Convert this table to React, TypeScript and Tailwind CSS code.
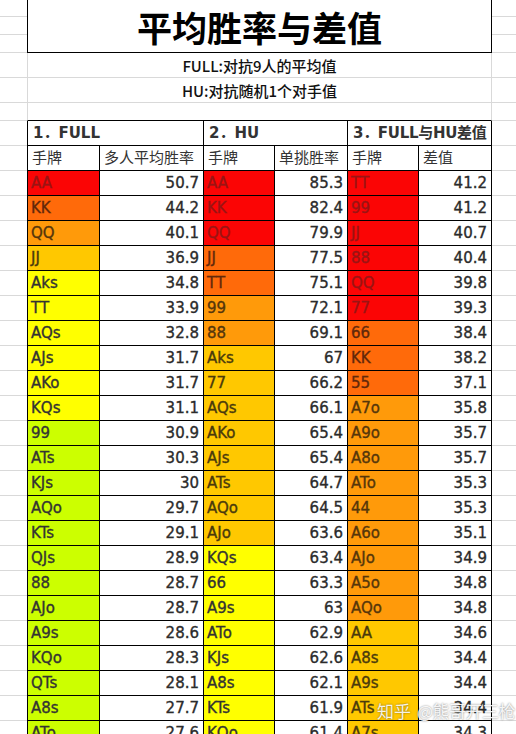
import React from 'react';

type Tone = 'R' | 'O1' | 'O2' | 'A' | 'Y' | 'G';

const tones: Record<Tone, string> = {
  R: 'bg-[#fb0505] text-[#9a1414]',
  O1: 'bg-[#ff6a0a] text-[#62280a]',
  O2: 'bg-[#ff9a0a] text-[#55360a]',
  A: 'bg-[#ffc800] text-[#4a3a0c]',
  Y: 'bg-[#ffff00] text-[#333333]',
  G: 'bg-[#ccff00] text-[#333333]',
};

// [hand, tone, value] for each of the three blocks
const rows: [string, Tone, string, string, Tone, string, string, Tone, string][] = [
  ['AA', 'R', '50.7', 'AA', 'R', '85.3', 'TT', 'R', '41.2'],
  ['KK', 'O1', '44.2', 'KK', 'R', '82.4', '99', 'R', '41.2'],
  ['QQ', 'O2', '40.1', 'QQ', 'R', '79.9', 'JJ', 'R', '40.7'],
  ['JJ', 'A', '36.9', 'JJ', 'O1', '77.5', '88', 'R', '40.4'],
  ['Aks', 'Y', '34.8', 'TT', 'O1', '75.1', 'QQ', 'R', '39.8'],
  ['TT', 'Y', '33.9', '99', 'O2', '72.1', '77', 'R', '39.3'],
  ['AQs', 'Y', '32.8', '88', 'O2', '69.1', '66', 'O1', '38.4'],
  ['AJs', 'Y', '31.7', 'Aks', 'A', '67', 'KK', 'O1', '38.2'],
  ['AKo', 'Y', '31.7', '77', 'A', '66.2', '55', 'O1', '37.1'],
  ['KQs', 'Y', '31.1', 'AQs', 'A', '66.1', 'A7o', 'O2', '35.8'],
  ['99', 'G', '30.9', 'AKo', 'A', '65.4', 'A9o', 'O2', '35.7'],
  ['ATs', 'G', '30.3', 'AJs', 'A', '65.4', 'A8o', 'O2', '35.7'],
  ['KJs', 'G', '30', 'ATs', 'A', '64.7', 'ATo', 'O2', '35.3'],
  ['AQo', 'G', '29.7', 'AQo', 'A', '64.5', '44', 'O2', '35.3'],
  ['KTs', 'G', '29.1', 'AJo', 'A', '63.6', 'A6o', 'O2', '35.1'],
  ['QJs', 'G', '28.9', 'KQs', 'Y', '63.4', 'AJo', 'O2', '34.9'],
  ['88', 'G', '28.7', '66', 'Y', '63.3', 'A5o', 'O2', '34.8'],
  ['AJo', 'G', '28.7', 'A9s', 'Y', '63', 'AQo', 'O2', '34.8'],
  ['A9s', 'G', '28.6', 'ATo', 'Y', '62.9', 'AA', 'A', '34.6'],
  ['KQo', 'G', '28.3', 'KJs', 'Y', '62.6', 'A8s', 'A', '34.4'],
  ['QTs', 'G', '28.1', 'A8s', 'Y', '62.1', 'A9s', 'A', '34.4'],
  ['A8s', 'G', '27.7', 'KTs', 'Y', '61.9', 'ATs', 'A', '34.4'],
  ['ATo', 'G', '27.6', 'KQo', 'Y', '61.4', 'A7s', 'A', '34.3'],
];

const grid = 'border-b border-[#d9d9d9]';
const cell = 'flex h-full items-center border-r border-b border-black';
const heavy = '[-webkit-text-stroke:0.35px_currentColor]';

function Margins({ children, h }: { children: React.ReactNode; h: string }) {
  return (
    <div className={`flex ${h}`}>
      <div className={`w-[27px] shrink-0 ${grid}`} />
      {children}
      <div className={`flex-1 ${grid}`} />
    </div>
  );
}

function HandCell({ hand, tone, w }: { hand: string; tone: Tone; w: string }) {
  return <div className={`${cell} ${w} pl-[3px] ${heavy} ${tones[tone]}`}>{hand}</div>;
}

function ValueCell({ value, w }: { value: string; w: string }) {
  return <div className={`${cell} ${w} justify-end bg-white pr-[4px] text-[#2b2b2b] ${heavy}`}>{value}</div>;
}

export default function App() {
  return (
    <div className="relative h-[734px] overflow-hidden bg-white font-['DejaVu_Sans','Noto_Sans_CJK_SC',sans-serif] text-[15px] leading-none">
      {/* Title */}
      <div className="flex h-[53px]">
        <div className="flex w-[27px] shrink-0 flex-col">
          <div className={`h-[17px] ${grid}`} />
          <div className={`h-[18px] ${grid}`} />
          <div className={`h-[18px] ${grid}`} />
        </div>
        <div className="flex w-[465px] items-center justify-center border-x border-b border-black font-['Noto_Sans_CJK_SC',sans-serif] text-[35px] font-bold text-black">
          平均胜率与差值
        </div>
        <div className="flex flex-1 flex-col">
          <div className={`h-[17px] ${grid}`} />
          <div className={`h-[18px] ${grid}`} />
          <div className={`h-[18px] ${grid}`} />
        </div>
      </div>

      {/* Notes */}
      <Margins h="h-[25px]">
        <div className={`flex w-[465px] items-center justify-center border-x border-[#d9d9d9] ${grid} pt-[1px] font-['Noto_Sans_CJK_SC',sans-serif] font-medium text-[#111]`}>
          FULL:对抗9人的平均值
        </div>
      </Margins>
      <Margins h="h-[25px]">
        <div className={`flex w-[465px] items-center justify-center border-x border-[#d9d9d9] ${grid} pt-[1px] font-['Noto_Sans_CJK_SC',sans-serif] font-medium text-[#111]`}>
          HU:对抗随机1个对手值
        </div>
      </Margins>
      <Margins h="h-[18px]">
        <div className="w-[465px] border-x border-b border-x-[#d9d9d9] border-b-black" />
      </Margins>

      {/* Table headers */}
      <Margins h="h-[25px]">
        <div className="flex w-[465px] border-l border-black text-[#333]">
          <div className={`${cell} w-[176px] pl-[5px] font-semibold`}>1．FULL</div>
          <div className={`${cell} w-[144px] pl-[5px] font-semibold`}>2．HU</div>
          <div className={`${cell} w-[144px] pl-[5px] font-semibold tracking-[-0.3px]`}>3．FULL与HU差值</div>
        </div>
      </Margins>
      <Margins h="h-[25px]">
        <div className="flex w-[465px] border-l border-black text-[#333]">
          <div className={`${cell} w-[72px] pl-[4px]`}>手牌</div>
          <div className={`${cell} w-[104px] pl-[4px]`}>多人平均胜率</div>
          <div className={`${cell} w-[71px] pl-[4px]`}>手牌</div>
          <div className={`${cell} w-[73px] pl-[4px]`}>单挑胜率</div>
          <div className={`${cell} w-[71px] pl-[4px]`}>手牌</div>
          <div className={`${cell} w-[73px] pl-[4px]`}>差值</div>
        </div>
      </Margins>

      {/* Data */}
      {rows.map((r, i) => (
        <Margins key={i} h="h-[25px]">
          <div className="flex w-[465px] border-l border-black">
            <HandCell hand={r[0]} tone={r[1]} w="w-[72px]" />
            <ValueCell value={r[2]} w="w-[104px]" />
            <HandCell hand={r[3]} tone={r[4]} w="w-[71px]" />
            <ValueCell value={r[5]} w="w-[73px]" />
            <HandCell hand={r[6]} tone={r[7]} w="w-[71px]" />
            <ValueCell value={r[8]} w="w-[73px]" />
          </div>
        </Margins>
      ))}

      {/* Watermark */}
      <div className="absolute left-[377px] top-[702px] flex gap-[6px] whitespace-nowrap font-['Noto_Sans_CJK_SC',sans-serif] text-[17px] leading-none text-white/90 [text-shadow:0_0_2px_rgba(0,0,0,0.55)]">
        <span>知乎</span>
        <span className="tracking-[-0.5px]">@熊哥开三枪</span>
      </div>
    </div>
  );
}
